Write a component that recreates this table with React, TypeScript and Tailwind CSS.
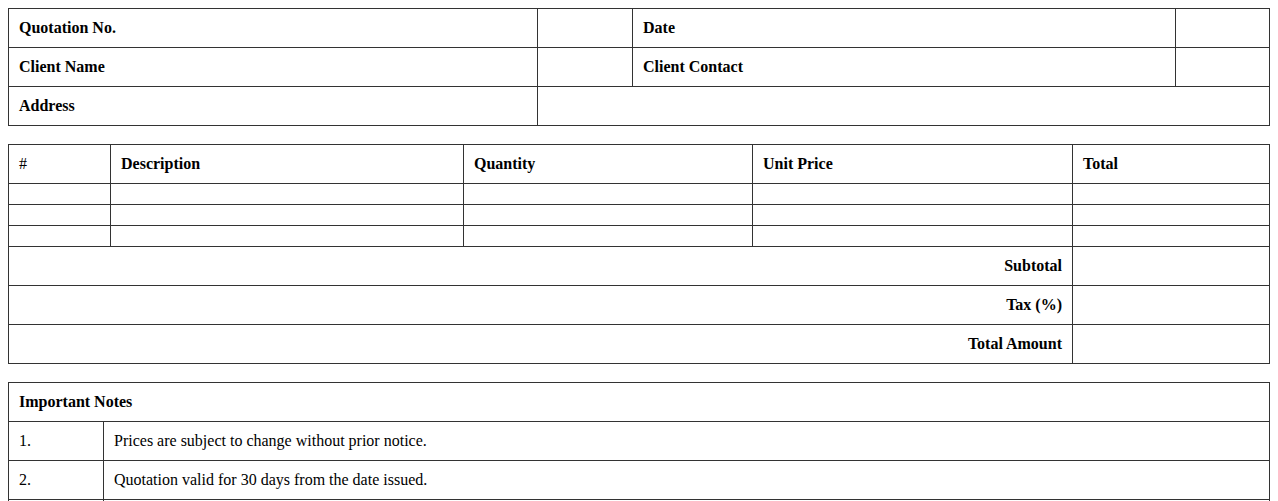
const cell = "border border-[#333] px-[10px] py-[10px] leading-[18px] align-middle";

export default function App() {
  const items = [1, 2, 3];
  const notes = [
    "Prices are subject to change without prior notice.",
    "Quotation valid for 30 days from the date issued.",
  ];

  return (
    <div className="p-2 bg-white text-black text-[16px]" style={{ fontFamily: '"Liberation Serif", "Times New Roman", serif' }}>
      {/* Header info */}
      <table className="w-full table-fixed border-collapse mb-[18px]">
        <colgroup>
          <col className="w-[529px]" />
          <col className="w-[95px]" />
          <col className="w-[543px]" />
          <col />
        </colgroup>
        <tbody>
          <tr>
            <td className={`${cell} font-bold`}>Quotation No.</td>
            <td className={cell}></td>
            <td className={`${cell} font-bold`}>Date</td>
            <td className={cell}></td>
          </tr>
          <tr>
            <td className={`${cell} font-bold`}>Client Name</td>
            <td className={cell}></td>
            <td className={`${cell} font-bold`}>Client Contact</td>
            <td className={cell}></td>
          </tr>
          <tr>
            <td className={`${cell} font-bold`}>Address</td>
            <td className={cell} colSpan={3}></td>
          </tr>
        </tbody>
      </table>

      {/* Line items */}
      <table className="w-full table-fixed border-collapse mb-[18px]">
        <colgroup>
          <col className="w-[102px]" />
          <col className="w-[353px]" />
          <col className="w-[289px]" />
          <col className="w-[320px]" />
          <col />
        </colgroup>
        <thead>
          <tr className="text-left">
            <th className={`${cell} font-normal`}>#</th>
            <th className={`${cell} font-bold`}>Description</th>
            <th className={`${cell} font-bold`}>Quantity</th>
            <th className={`${cell} font-bold`}>Unit Price</th>
            <th className={`${cell} font-bold`}>Total</th>
          </tr>
        </thead>
        <tbody>
          {items.map((i) => (
            <tr key={i}>
              <td className="border border-[#333] h-[21px]"></td>
              <td className="border border-[#333]"></td>
              <td className="border border-[#333]"></td>
              <td className="border border-[#333]"></td>
              <td className="border border-[#333]"></td>
            </tr>
          ))}
          <tr>
            <td className={`${cell} font-bold text-right`} colSpan={4}>Subtotal</td>
            <td className={cell}></td>
          </tr>
          <tr>
            <td className={`${cell} font-bold text-right`} colSpan={4}>Tax (%)</td>
            <td className={cell}></td>
          </tr>
          <tr>
            <td className={`${cell} font-bold text-right`} colSpan={4}>Total Amount</td>
            <td className={cell}></td>
          </tr>
        </tbody>
      </table>

      {/* Notes */}
      <table className="w-full table-fixed border-collapse">
        <colgroup>
          <col className="w-[95px]" />
          <col />
        </colgroup>
        <tbody>
          <tr>
            <td className={`${cell} font-bold`} colSpan={2}>Important Notes</td>
          </tr>
          {notes.map((n, i) => (
            <tr key={i}>
              <td className={cell}>{i + 1}.</td>
              <td className={cell}>{n}</td>
            </tr>
          ))}
          <tr>
            <td className="border border-[#333] h-[39px]"></td>
            <td className="border border-[#333]"></td>
          </tr>
        </tbody>
      </table>
    </div>
  );
}
